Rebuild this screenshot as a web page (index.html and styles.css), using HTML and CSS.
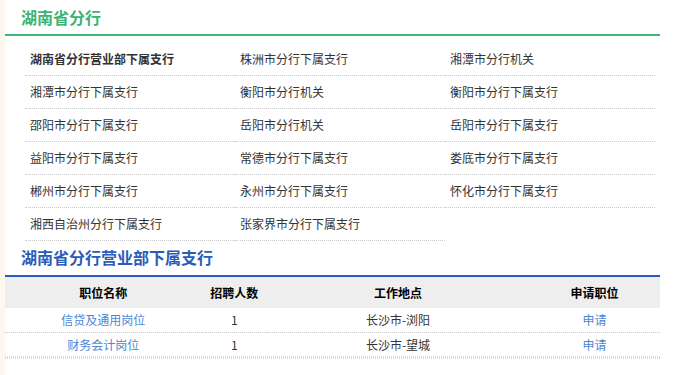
FILE: index.html
```html
<!DOCTYPE html>
<html lang="zh-CN">
<head>
    <meta charset="UTF-8">
    <meta name="viewport" content="width=device-width, initial-scale=1.0">
    <title>湖南省分行</title>
    <link rel="stylesheet" href="styles.css">
</head>
<body>
    <div class="page">
        <h2 class="branch-title">湖南省分行</h2>

        <ul class="branch-list">
            <li class="current">湖南省分行营业部下属支行</li>
            <li>株洲市分行下属支行</li>
            <li>湘潭市分行机关</li>
            <li>湘潭市分行下属支行</li>
            <li>衡阳市分行机关</li>
            <li>衡阳市分行下属支行</li>
            <li>邵阳市分行下属支行</li>
            <li>岳阳市分行机关</li>
            <li>岳阳市分行下属支行</li>
            <li>益阳市分行下属支行</li>
            <li>常德市分行下属支行</li>
            <li>娄底市分行下属支行</li>
            <li>郴州市分行下属支行</li>
            <li>永州市分行下属支行</li>
            <li>怀化市分行下属支行</li>
            <li>湘西自治州分行下属支行</li>
            <li>张家界市分行下属支行</li>
        </ul>

        <h2 class="section-title">湖南省分行营业部下属支行</h2>

        <table class="jobs">
            <thead>
                <tr>
                    <th class="col-name">职位名称</th>
                    <th class="col-count">招聘人数</th>
                    <th class="col-place">工作地点</th>
                    <th class="col-apply">申请职位</th>
                </tr>
            </thead>
            <tbody>
                <tr>
                    <td><a href="#">信贷及通用岗位</a></td>
                    <td>1</td>
                    <td>长沙市-浏阳</td>
                    <td><a href="#">申请</a></td>
                </tr>
                <tr>
                    <td><a href="#">财务会计岗位</a></td>
                    <td>1</td>
                    <td>长沙市-望城</td>
                    <td><a href="#">申请</a></td>
                </tr>
            </tbody>
        </table>
        <div class="table-end"></div>
    </div>
</body>
</html>
```

FILE: styles.css
```css
* {
    margin: 0;
    padding: 0;
    box-sizing: border-box;
}

body {
    font-family: "Noto Sans CJK SC", "Noto Sans", sans-serif;
    font-size: 12px;
    color: #333;
    background: #fff;
    border-left: 5px solid #fdf8ef;
    min-height: 100vh;
}

.page {
    width: 655px;
}

.branch-title {
    height: 36px;
    line-height: 35px;
    padding-left: 16px;
    font-size: 16px;
    font-weight: bold;
    color: #3cb371;
    border-bottom: 2px solid #3fb57a;
}

.branch-list {
    list-style: none;
    display: grid;
    grid-template-columns: repeat(3, 210px);
    margin: 7px 0 0 20px;
}

.branch-list li {
    height: 33px;
    line-height: 32px;
    padding-left: 5px;
    border-bottom: 1px dotted #ccc;
    white-space: nowrap;
}

.branch-list li.current {
    font-weight: bold;
}

.section-title {
    height: 36px;
    line-height: 33px;
    padding-left: 16px;
    font-size: 16px;
    font-weight: bold;
    color: #2a5cb8;
    border-bottom: 2px solid #2a5cbe;
}

.jobs {
    width: 655px;
    border-collapse: collapse;
    table-layout: fixed;
    text-align: center;
}

.jobs .col-name { width: 30%; }
.jobs .col-count { width: 10%; }
.jobs .col-place { width: 40%; }
.jobs .col-apply { width: 20%; }

.jobs th {
    height: 31px;
    background: #eee;
    color: #000;
    font-weight: bold;
    padding: 0;
}

.jobs td {
    height: 24px;
    padding: 0;
    border-bottom: 1px dotted #ccc;
}

.jobs tbody tr:last-child td {
    border-bottom: none;
    height: 24px;
}

.table-end {
    height: 3px;
    background: repeating-linear-gradient(90deg, #d8d8d8 0 1px, transparent 1px 2px);
}

.jobs a {
    color: #4a86d8;
    text-decoration: none;
}
```
